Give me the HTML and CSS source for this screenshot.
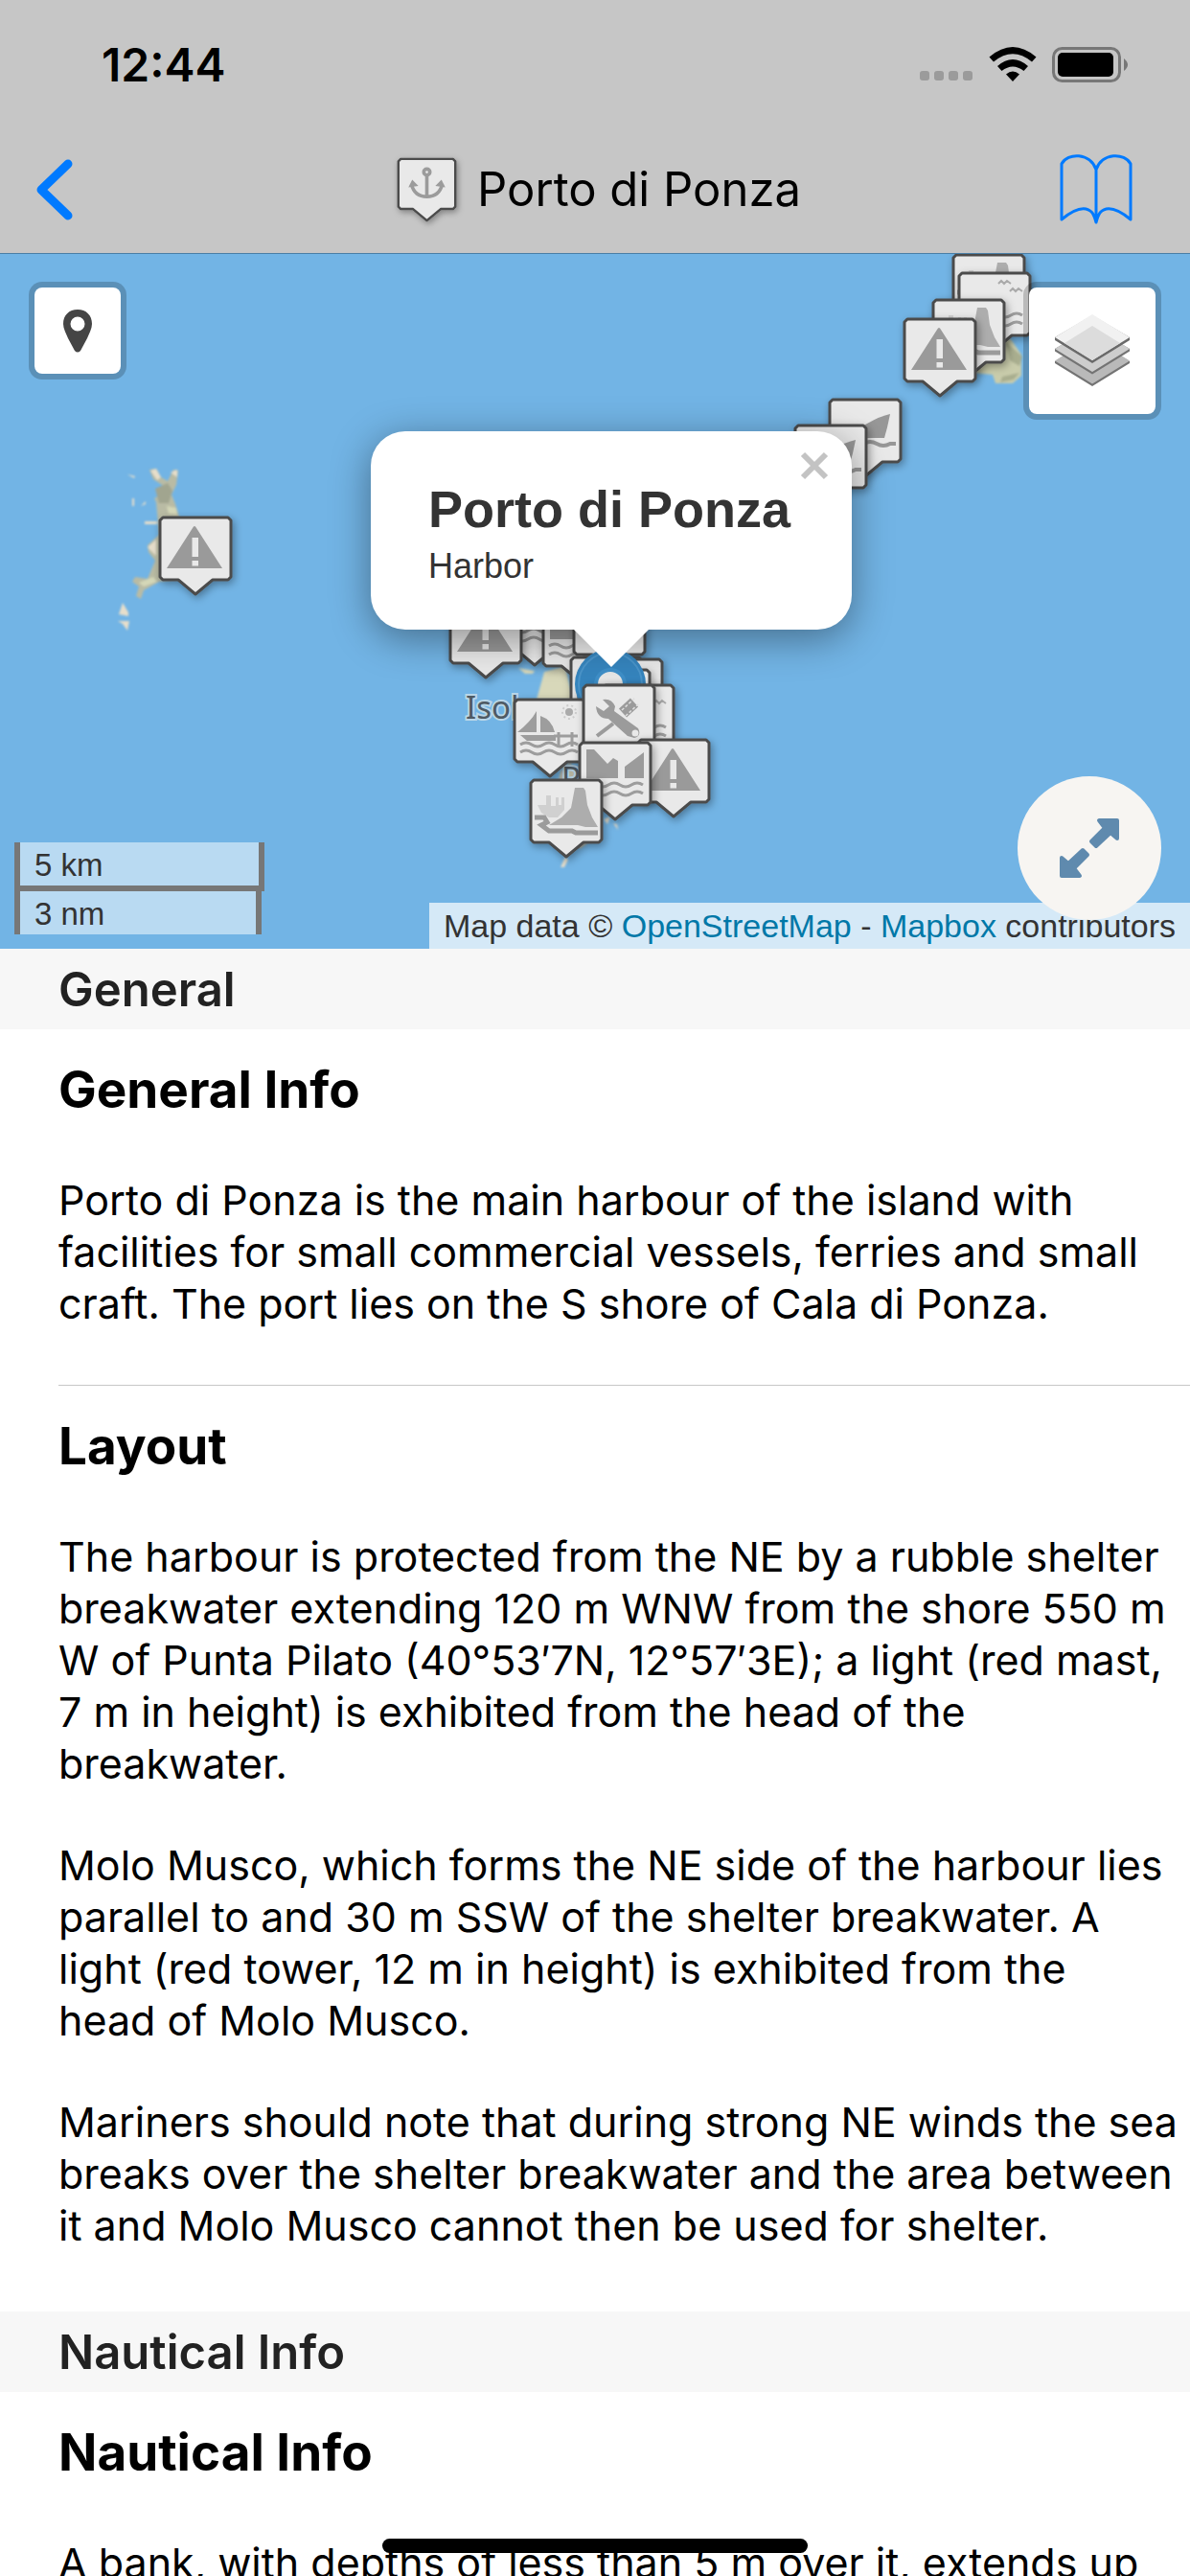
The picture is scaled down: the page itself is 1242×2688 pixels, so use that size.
FILE: index.html
```html
<!DOCTYPE html>
<html lang="en">
<head>
<meta charset="utf-8">
<meta name="viewport" content="width=device-width">
<title>Porto di Ponza</title>
<link rel="stylesheet" href="styles.css">
</head>
<body>
<div class="app">
  <header class="top">
    <div class="status">
      <span class="clock">12:44</span>
      <div class="status-icons">
        <svg width="56" height="36" viewBox="0 0 56 36" fill="#9b9b9b" aria-hidden="true">
          <rect x="0" y="25" width="10" height="10" rx="3"/><rect x="15" y="25" width="10" height="10" rx="3"/><rect x="30" y="25" width="10" height="10" rx="3"/><rect x="45" y="25" width="10" height="10" rx="3"/>
        </svg>
        <svg width="50" height="36" viewBox="0 0 50 36" aria-hidden="true">
          <path d="M0.500 10.500Q25 -10.500 49.500 10.500L45 15.500Q25 -1 5 15.500ZM9 20Q25 6 41 20L36.500 25Q25 16 13.500 25ZM18 28.500Q25 22.500 32 28.500L25 36Z"/>
        </svg>
        <svg width="80" height="37" viewBox="0 0 80 37" aria-hidden="true">
          <rect x="1.500" y="1.500" width="69" height="34" rx="9" fill="none" stroke="#777" stroke-width="3"/>
          <rect x="6" y="6" width="58" height="25" rx="5"/>
          <path d="M75 12q8 6.500 0 13z" fill="#777"/>
        </svg>
      </div>
    </div>
    <nav class="nav">
      <button class="nav-button" type="button" aria-label="Back">
        <svg width="38" height="64" viewBox="0 0 38 64" fill="none" stroke="#007aff" stroke-width="9" stroke-linecap="round" stroke-linejoin="round"><path d="M33 5L5 32L33 59"/></svg>
      </button>
      <div class="nav-title">
        <svg class="nav-pin" width="61" height="66" viewBox="0 0 76 82" aria-hidden="true"><use href="#pin"/>
          <g fill="none" stroke="#9b9b9b" stroke-width="4.500"><circle cx="38" cy="18" r="4"/><path d="M38 22V50M18 34Q22 50 38 50T58 34"/></g>
          <path d="M14 38L19 28L27 36ZM62 38L57 28L49 36Z" fill="#9b9b9b"/>
        </svg>
        <h1>Porto di Ponza</h1>
      </div>
      <button class="nav-button" type="button" aria-label="Guide">
        <svg width="76" height="73" viewBox="0 0 76 73" fill="none" stroke="#007aff" stroke-width="3" stroke-linejoin="round"><path d="M38 71V16C32 -2 8 -2 2 10V68Q24 50 34 61Q36 64 38 71Q40 64 42 61Q52 50 74 68V10C68 -2 44 -2 38 16"/></svg>
      </button>
    </nav>
  </header>

  <section class="map" aria-label="Map">
    <svg class="map-canvas" viewBox="0 265 1242 725" preserveAspectRatio="xMidYMid slice" aria-hidden="true">
      <defs>
        <filter id="shade" x="-30%" y="-30%" width="160%" height="160%"><feDropShadow dx="2" dy="3" stdDeviation="4" flood-color="#000" flood-opacity=".35"/></filter>
        <filter id="soft"><feGaussianBlur stdDeviation=".9"/></filter>
        <radialGradient id="face" cx=".5" cy=".42" r=".75"><stop offset=".82" stop-color="#e9e9e9"/><stop offset="1" stop-color="#b5b5b5"/></radialGradient>
        <g id="pin"><path filter="url(#shade)" d="M4 1H72L75 4V63L72 66H56L38 81L20 66H4L1 63V4Z" fill="url(#face)" stroke="#4b4b4b" stroke-width="3" stroke-linejoin="round"/></g>
        <g id="warning"><use href="#pin"/><path d="M35 12Q37 8 39 12L66 54H8Z" fill="#9a9a9a"/><path d="M34.500 22H41V42H34.500ZM34.500 46H41V51.500H34.500Z" fill="#e9e9e9"/></g>
        <path id="waves" d="M7 45q6-4 12 0t12 0t12 0t12 0t12 0M7 54q6-4 12 0t12 0t12 0t12 0t12 0" fill="none" stroke="#9d9d9d" stroke-width="3"/>
        <g id="fjord"><use href="#pin"/><path d="M8 8H16L30 23L36 17L41 20V38H8ZM48 26L68 11V38H48Z" fill="#9b9b9b"/><use href="#waves"/></g>
        <g id="cape"><use href="#pin"/><path d="M8 27L17 27V17H22V28H27V19H30V27H33V19H36V32L29 40H20L12 35Z" fill="#d0d0d0"/><path d="M47 9H56L58 12L60 27L65 40L71 50H58L50 48H20L33 40L43 30Z" fill="#adadad"/><path d="M5 40H15L18 45L12 48L20 54H44L48 56H71" fill="none" stroke="#9b9b9b" stroke-width="5"/></g>
        <g id="sail"><use href="#pin"/><path d="M24 13V35H4Q18 24 24 13ZM28 18Q40 22 43 35H28ZM7 38H44V44H14Z" fill="#9d9d9d"/><path d="M42 39H67M47 35V50M61 35V50" fill="none" stroke="#9d9d9d" stroke-width="3"/><path d="M7 48q6-4 12 0t12 0t12 0t12 0t12 0M7 56q6-4 12 0t12 0t12 0t12 0t12 0" fill="none" stroke="#9d9d9d" stroke-width="3"/><circle cx="58" cy="14" r="4" fill="#aaa"/><circle cx="58" cy="14" r="7" fill="none" stroke="#ccc" stroke-width="2" stroke-dasharray="2 3"/></g>
        <g id="tools"><use href="#pin"/><path d="M15 54L32 41" stroke="#9b9b9b" stroke-width="4"/><path d="M42 30L54 19" stroke="#9b9b9b" stroke-width="12"/><path d="M41 27L55 14M45 33L59 20" stroke="#dedede" stroke-width="1.500" stroke-dasharray="3 2"/><path d="M21 16Q30 14 34 23L33 28L58 46Q62 54 54 56L47 54L27 36Q15 36 14 23L22 28L28 23Z" fill="#9b9b9b"/><circle cx="55" cy="51" r="3.500" fill="#e9e9e9"/></g>
        <g id="fin"><use href="#pin"/><path d="M64 16L61 30L58 41H14Q26 34 40 26T64 16Z" fill="#979797"/><path d="M8 47q7-4 14 0t14 0t14 0t14 0h6" fill="none" stroke="#979797" stroke-width="4"/></g>
        <g id="bay"><use href="#pin"/><path d="M42 12l3-3 3 3 3-3 4 3M54 20l3-3 3 3 3-3 4 3" fill="none" stroke="#aaa" stroke-width="2"/><use href="#waves"/></g>
      </defs>

      <g filter="url(#soft)">
        <path d="M156 490L163 489L168 498L175 502L181 490L186 491L184 506L179 516L183 526L187 539L190 604L166 607L150 616L147 625L142 622L145 612L138 607L141 602L154 604L162 585L155 576L154 569L166 558L163 524L161 520L168 516L172 508L160 500Z" fill="#b9bba4"/>
        <path d="M157 491L163 489L168 498L164 501ZM178 493L185 490L185 498ZM154 571L163 563V580ZM128 629L134 639V643L124 641ZM123 648H135L133 658L128 651ZM151 544H164V547H151ZM138 520h2v8h-2zM147 528l5-5v3zM133 495l8 2-1 2z" fill="#e6decb"/>
        <path d="M145 608L160 602L164 607L150 612ZM174 528L184 530L185 537L176 536Z" fill="#d4d7b7"/>
        <path d="M162 510L175 504L180 512L176 525L166 525Z" fill="#a1a58f"/>
        <path d="M1005 388L1040 352L1055 354L1066 370L1066 392L1057 400L1039 400L1036 391Z" fill="#c9ccab"/>
        <path d="M1050 357L1067 372L1064 382L1054 376ZM1046 393L1064 389L1058 396L1044 399Z" fill="#a9ae8f"/>
        <path d="M541 697L558 700L556 703L548 703ZM568 701L590 695L598 730H560Z" fill="#d8d8ba"/>
        <path d="M595 795L585 805L583 815H604ZM602 877L618 876L605 886Z" fill="#b9b7a2"/>
        <path d="M590 894L593 897L589 905H585ZM630 855L637 852L634 860ZM640 859l4 1 1 6z" fill="#e6decb"/>
      </g>
      <g class="map-label"><text x="486" y="750">Isola</text><text x="586" y="824">P</text></g>

      <use href="#cape" x="994" y="265"/>
      <use href="#bay" x="1000" y="284"/>
      <use href="#cape" x="973" y="312"/>
      <use href="#warning" x="943" y="332"/>
      <use href="#fin" x="865" y="416"/>
      <use href="#fin" x="829" y="443"/>
      <use href="#warning" x="166" y="539"/>
      <use href="#fjord" x="520" y="613"/>
      <use href="#warning" x="469" y="626"/>
      <use href="#fjord" x="566" y="629"/>
      <use href="#pin" x="598" y="617"/>
      <use href="#pin" x="595" y="685"/>
      <use href="#pin" x="616" y="687"/>
      <use href="#pin" x="603" y="698"/>
      <circle cx="637" cy="714" r="37" fill="#3584bd"/>
      <circle cx="637" cy="714" r="33" fill="none" stroke="#4a94c9" stroke-width="2"/>
      <circle cx="637" cy="714" r="15" fill="#e6e6e6" stroke="#3e8ec7" stroke-width="4"/>
      <use href="#bay" x="628" y="714"/>
      <use href="#sail" x="536" y="729"/>
      <use href="#tools" x="608" y="714"/>
      <use href="#warning" x="665" y="771"/>
      <use href="#fjord" x="604" y="774"/>
      <use href="#cape" x="553" y="813"/>
    </svg>

    <button class="map-button locate" type="button" aria-label="Show position">
      <svg width="30" height="45" viewBox="0 0 30 45"><path fill-rule="evenodd" d="M15 0C6 0 0 6 0 15C0 20 3 25 5 30L12 43Q15 46 18 43L25 30C27 25 30 20 30 15C30 6 24 0 15 0ZM15 7.500A7.500 7.500 0 1 1 15 22.500A7.500 7.500 0 1 1 15 7.500Z" fill="#454545"/></svg>
    </button>
    <button class="map-button layers" type="button" aria-label="Layers">
      <svg width="78" height="76" viewBox="0 0 78 76">
        <path d="M0 49L39 25L78 49V51L39 75L0 51Z" fill="#737373"/><path d="M0 48.500L39 24L78 48.500L39 72.500Z" fill="#b9b9b9"/>
        <path d="M0 36L39 13L78 36V38.500L39 62.500L0 38.500Z" fill="#737373"/><path d="M0 36L39 12L78 36L39 60Z" fill="#cdcdcd"/>
        <path d="M0 24L39 1L78 24V27L39 51L0 27Z" fill="#6a6a6a"/><path d="M0 24L39 0L78 24L39 48Z" fill="#f1f1f1"/><path d="M39 12L68 30L39 48L10 30Z" fill="#dcdcdc"/>
      </svg>
    </button>

    <div class="popup" role="dialog" aria-labelledby="popup-title">
      <h2 id="popup-title">Porto di Ponza</h2>
      <p>Harbor</p>
      <button class="popup-close" type="button" aria-label="Close">
        <svg width="30" height="30" viewBox="0 0 30 30" stroke="#c3c3c3" stroke-width="6"><path d="M3 3L27 27M27 3L3 27"/></svg>
      </button>
    </div>

    <div class="scale">
      <div class="scale-km">5 km</div>
      <div class="scale-nm">3 nm</div>
    </div>
    <div class="attribution">Map data © <a href="#osm">OpenStreetMap</a> - <a href="#mapbox">Mapbox</a> contributors</div>
    <button class="expand" type="button" aria-label="Full screen">
      <svg width="62" height="62" viewBox="0 0 62 62" fill="#5f8aae" stroke="#5f8aae" stroke-width="4" stroke-linejoin="round"><path d="M41 2H60V21L53 15L38 29L33 24L47 10ZM21 60H2V41L9 47L24 33L29 38L15 52Z"/></svg>
    </button>
  </section>

  <main class="details">
    <section>
      <h2 class="section-title">General</h2>
      <div class="section-body">
        <article class="entry">
          <h3>General Info</h3>
          <p>Porto di Ponza is the main harbour of the island with<br>facilities for small commercial vessels, ferries and small<br>craft. The port lies on the S shore of Cala di Ponza.</p>
        </article>
        <article class="entry">
          <h3>Layout</h3>
          <p>The harbour is protected from the NE by a rubble shelter<br>breakwater extending 120 m WNW from the shore 550 m<br>W of Punta Pilato (40°53′7N, 12°57′3E); a light (red mast,<br>7 m in height) is exhibited from the head of the<br>breakwater.</p>
          <p>Molo Musco, which forms the NE side of the harbour lies<br>parallel to and 30 m SSW of the shelter breakwater. A<br>light (red tower, 12 m in height) is exhibited from the<br>head of Molo Musco.</p>
          <p>Mariners should note that during strong NE winds the sea<br>breaks over the shelter breakwater and the area between<br>it and Molo Musco cannot then be used for shelter.</p>
        </article>
      </div>
    </section>
    <section>
      <h2 class="section-title">Nautical Info</h2>
      <div class="section-body">
        <article class="entry">
          <h3>Nautical Info</h3>
          <p>A bank, with depths of less than 5 m over it, extends up</p>
        </article>
      </div>
    </section>
  </main>
  <div class="home-indicator"></div>
</div>
</body>
</html>
```
FILE: styles.css
```css
* { box-sizing: border-box; }

body, h1, h2, h3, p { margin: 0; }

body {
  background: #fff;
  color: #000;
  font-family: Inter, "Liberation Sans", sans-serif;
}

button {
  display: flex;
  align-items: center;
  justify-content: center;
  padding: 0;
  border: 0;
  background: none;
  cursor: pointer;
}

svg { display: block; flex: none; }

.app {
  position: relative;
  display: flex;
  flex-direction: column;
  height: 100vh;
  overflow: hidden;
}

/* Header */
.top {
  flex: none;
  background: #c6c6c6;
  border-bottom: 1px solid #4b7fa6;
}

.status {
  display: flex;
  align-items: center;
  justify-content: space-between;
  height: 135px;
  padding: 0 64px 0 106px;
}

.clock { font-size: 48px; font-weight: 600; }

.status-icons { display: flex; gap: 16px; }

.nav {
  display: grid;
  grid-template-columns: 128px 1fr 97px;
  align-items: center;
  height: 129px;
  padding: 0 60px 4px 38px;
}

.nav-button:first-child { justify-content: flex-start; }
.nav-button:last-child { justify-content: flex-end; }

.nav-title {
  display: flex;
  align-items: center;
  justify-content: center;
  gap: 22px;
}

.nav-pin { overflow: visible; }

h1 { font-size: 49px; font-weight: 400; line-height: 60px; }

/* Map */
.map {
  position: relative;
  flex: none;
  height: 725px;
  overflow: hidden;
  background: #72b4e5;
  color: #333;
  font-family: "Liberation Sans", Arial, sans-serif;
  font-size: 34px;
}

.map-canvas {
  width: 100%;
  height: 100%;
}

.map-label {
  fill: #4f5a64;
  stroke: #b9d6e8;
  stroke-width: 4px;
  paint-order: stroke;
  font-family: "Noto Sans", sans-serif;
  font-size: 33px;
}

.map-button {
  position: absolute;
  top: 29px;
  background: #fff;
  background-clip: padding-box;
  border: 6px solid rgba(0, 0, 0, .2);
  border-radius: 14px;
}

.locate { left: 30px; width: 102px; height: 102px; }
.layers { right: 30px; width: 144px; height: 144px; }

.popup {
  position: absolute;
  top: 185px;
  left: 387px;
  padding: 51px 64px 46px 60px;
  background: #fff;
  border-radius: 36px;
  box-shadow: 0 9px 42px rgba(0, 0, 0, .4);
}

.popup::after {
  content: "";
  position: absolute;
  top: 100%;
  left: 50%;
  margin-left: -39px;
  border: 39px solid transparent;
  border-top-color: #fff;
  border-bottom: 0;
}

.popup h2 { font-size: 54px; line-height: 60px; }

.popup p { margin-top: 10px; font-size: 36px; line-height: 40px; }

.popup-close {
  position: absolute;
  top: 21px;
  right: 24px;
}

.scale {
  position: absolute;
  left: 15px;
  bottom: 15px;
  font-size: 33px;
  line-height: 43px;
}

.scale div {
  padding: 2px 0 0 15px;
  border: 6px solid #777;
  border-top: 0;
  background: rgba(255, 255, 255, .5);
  background-clip: padding-box;
}

.scale-km { width: 261px; }
.scale .scale-nm { width: 258px; border-bottom: 0; }

.attribution {
  position: absolute;
  right: 0;
  bottom: 0;
  padding: 0 15px;
  line-height: 48px;
  white-space: nowrap;
  background: rgba(255, 255, 255, .7);
}

.attribution a { color: #0078a8; text-decoration: none; }

.expand {
  position: absolute;
  right: 30px;
  bottom: 30px;
  width: 150px;
  height: 150px;
  border-radius: 50%;
  background: #f7f5f2;
}

/* Details */
.details {
  flex: 1;
  min-height: 0;
  overflow-y: auto;
  scrollbar-width: none;
}

.section-title {
  padding: 13px 61px 11px;
  background: #f7f7f7;
  color: #222;
  font-size: 49px;
  font-weight: 600;
  line-height: 60px;
}

.section-body { padding: 0 0 5px 61px; }

.entry { padding: 33px 0 58px; }
.entry + .entry { border-top: 1px solid #c8c8c8; }

.entry h3 {
  margin-bottom: 58px;
  font-size: 53px;
  font-weight: 700;
  line-height: 60px;
}

.entry p {
  font-size: 43px;
  line-height: 54px;
  white-space: nowrap;
}

.entry p + p { margin-top: 52px; }

.home-indicator {
  position: absolute;
  left: 50%;
  bottom: 24px;
  width: 444px;
  height: 15px;
  margin-left: -222px;
  border-radius: 8px;
  background: #000;
}
```
